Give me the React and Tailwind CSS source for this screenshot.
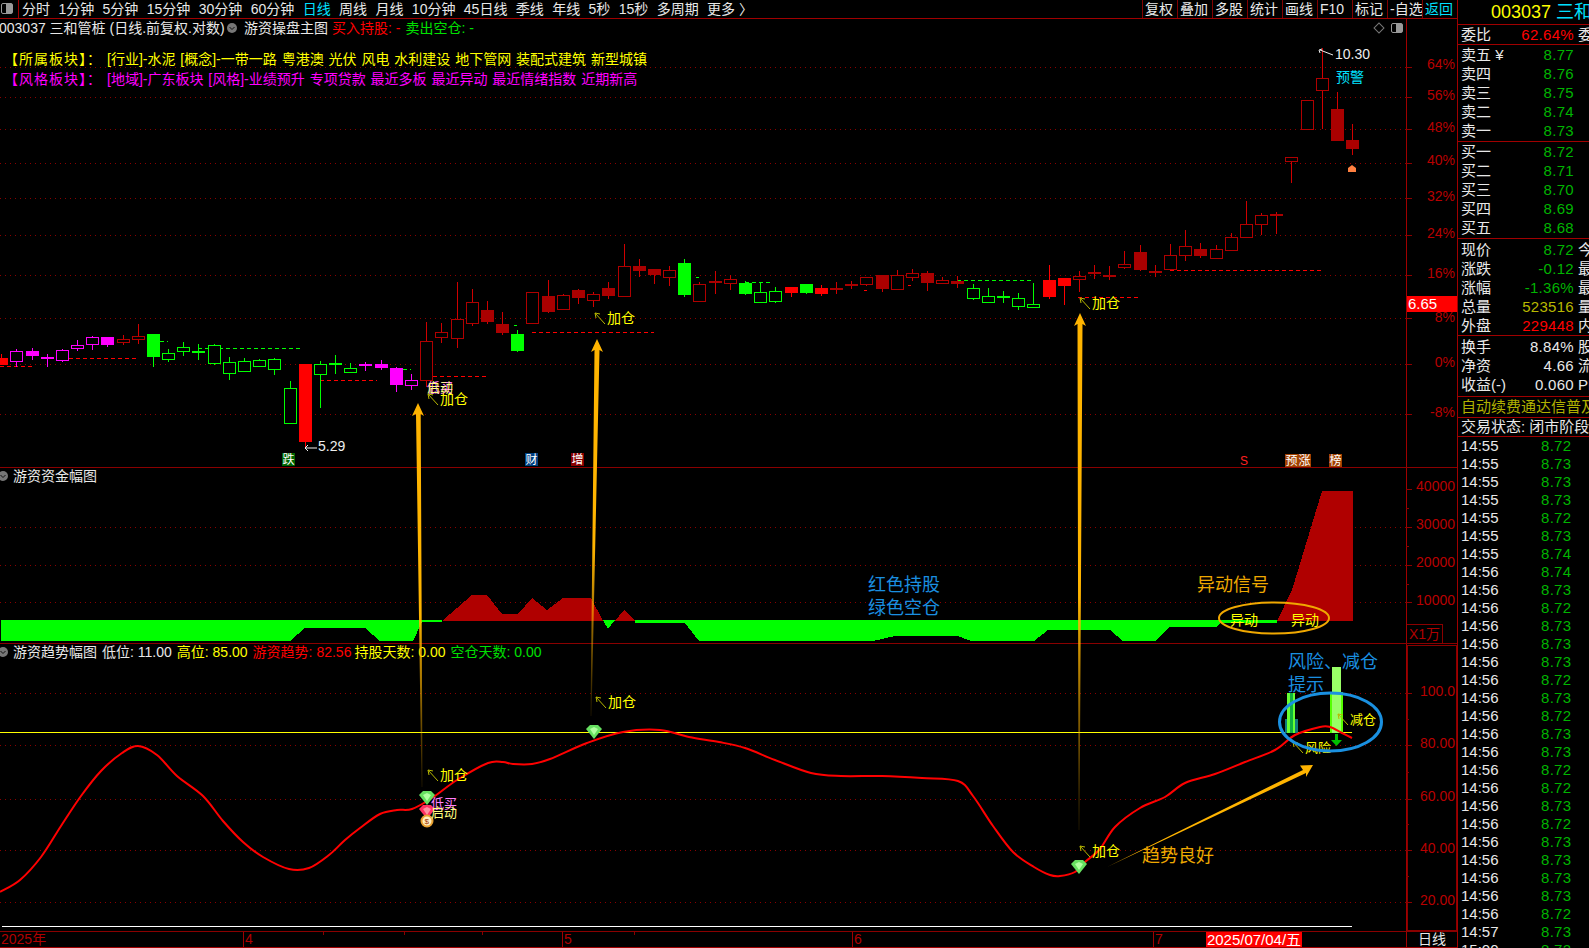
const candles = [
  [358, 365, 354, 365, 'r'], [351, 361, 349, 367, 'M'], [351, 356, 348, 360, 'm'], [357, 359, 354, 367, 'm'],
  [350, 360, 349, 362, 'M'], [345, 348, 340, 351, 'M'], [337, 344, 336, 350, 'M'], [337, 345, 337, 347, 'm'],
  [339, 342, 335, 345, 'h'], [336, 339, 324, 344, 'h'], [334, 357, 334, 367, 'g'], [353, 359, 349, 362, 'G'],
  [347, 351, 342, 356, 'G'], [351, 352, 344, 360, 'g'], [345, 363, 344, 365, 'G'], [362, 373, 357, 380, 'G'],
  [361, 371, 358, 372, 'G'], [360, 366, 359, 367, 'G'], [359, 369, 358, 375, 'G'], [388, 423, 381, 423, 'G'],
  [364, 442, 364, 448, 'r'], [364, 374, 361, 408, 'G'], [363, 365, 355, 374, 'g'], [368, 372, 363, 372, 'G'],
  [364, 366, 362, 371, 'm'], [364, 368, 360, 370, 'm'], [368, 385, 367, 392, 'm'], [380, 385, 374, 390, 'M'],
  [341, 380, 322, 387, 'h'], [332, 337, 323, 343, 'h'], [319, 338, 282, 348, 'h'], [302, 323, 289, 326, 'h'],
  [310, 322, 301, 324, 'd'], [324, 333, 312, 335, 'd'], [334, 351, 330, 352, 'g'], [292, 323, 292, 324, 'h'],
  [296, 312, 280, 313, 'd'], [295, 309, 294, 310, 'h'], [290, 298, 289, 304, 'd'], [294, 300, 292, 307, 'h'],
  [288, 296, 282, 299, 'd'], [266, 296, 244, 296, 'h'], [266, 271, 259, 277, 'd'], [269, 275, 269, 284, 'd'],
  [270, 277, 266, 286, 'h'], [263, 295, 259, 297, 'g'], [284, 301, 282, 301, 'h'], [281, 283, 271, 294, 'd'],
  [279, 283, 275, 290, 'h'], [283, 294, 281, 295, 'g'], [292, 302, 282, 302, 'G'], [291, 301, 287, 303, 'G'],
  [287, 293, 287, 297, 'r'], [284, 293, 284, 294, 'g'], [288, 294, 285, 296, 'r'], [288, 289, 282, 294, 'd'],
  [284, 285, 281, 289, 'd'], [277, 284, 277, 286, 'h'], [275, 289, 275, 292, 'd'], [275, 289, 270, 289, 'h'],
  [273, 277, 269, 281, 'h'], [273, 283, 271, 291, 'd'], [280, 283, 277, 283, 'h'], [281, 284, 276, 288, 'd'],
  [288, 298, 284, 300, 'G'], [296, 302, 288, 302, 'G'], [296, 298, 291, 303, 'g'], [298, 306, 293, 310, 'G'],
  [304, 307, 283, 308, 'G'], [280, 297, 265, 299, 'r'], [278, 286, 278, 305, 'r'], [276, 279, 271, 292, 'h'],
  [272, 274, 265, 279, 'd'], [275, 277, 266, 280, 'd'], [264, 267, 251, 269, 'h'], [252, 270, 245, 271, 'd'],
  [271, 272, 265, 277, 'd'], [255, 269, 244, 270, 'h'], [246, 255, 230, 261, 'h'], [249, 256, 243, 258, 'd'],
  [249, 258, 245, 259, 'h'], [237, 250, 233, 251, 'h'], [224, 237, 201, 237, 'h'], [215, 224, 213, 235, 'h'],
  [214, 215, 212, 234, 'd'], [157, 161, 157, 183, 'h'], [100, 129, 100, 129, 'h'], [78, 90, 48, 129, 'h'],
  [109, 141, 92, 141, 'd'], [140, 149, 124, 155, 'd'],
];

const candleColors = {
  r: { wick: '#ff0000', fill: '#ff0000' },
  d: { wick: '#d00000', fill: '#aa0000' },
  h: { wick: '#d00000', stroke: '#b00000' },
  g: { wick: '#00ff00', fill: '#00ff00' },
  G: { wick: '#00ff00', stroke: '#00ff00' },
  m: { wick: '#ff00ff', fill: '#ff00ff' },
  M: { wick: '#ff00ff', stroke: '#ff00ff' },
};

const dashes = [
  [0, 32, 366, '#ff0000'], [62, 137, 358, '#ff0000'], [160, 168, 341, '#00ff00'], [198, 303, 348, '#00ff00'],
  [320, 377, 380, '#ff0000'], [396, 411, 369, '#00ff00'], [426, 487, 376, '#ff0000'], [514, 517, 325, '#00ff00'],
  [532, 654, 332, '#ff0000'], [696, 699, 277, '#00ff00'], [745, 772, 282, '#00ff00'], [864, 867, 290, '#ff0000'],
  [908, 911, 285, '#ff0000'], [957, 1031, 280, '#00ff00'], [1078, 1140, 297, '#ff0000'], [1170, 1321, 270, '#ff0000'],
];

const gridLines = [67, 97, 129, 163, 198, 235, 275, 318, 364, 414, 527, 565, 602, 693, 745, 799, 850, 902];
const minorTicks = [489, 508, 546, 584, 719, 772, 824, 876];
const axisLabels = [
  ['64%', 64], ['56%', 95], ['48%', 127], ['40%', 160], ['32%', 196], ['24%', 233], ['16%', 273], ['8%', 317],
  ['0%', 362], ['-8%', 412], ['40000', 486], ['30000', 524], ['20000', 562], ['10000', 600],
  ['100.0', 691], ['80.00', 743], ['60.00', 796], ['40.00', 848], ['20.00', 900],
];

const trend = [
  [0, 892], [20, 880], [41, 857], [61, 826], [81, 796], [101, 771], [122, 753], [138, 746], [157, 755], [177, 776],
  [203, 796], [223, 821], [243, 842], [263, 857], [289, 869], [309, 868], [329, 855], [345, 840], [360, 828], [380, 814],
  [397, 810], [412, 809], [432, 798], [457, 780], [488, 763], [503, 762], [513, 764], [532, 764], [550, 759], [587, 743],
  [623, 732], [660, 730], [689, 737], [719, 742], [745, 748], [775, 760], [811, 773], [841, 776], [882, 776], [922, 778],
  [958, 781], [973, 796], [993, 826], [1013, 852], [1034, 867], [1050, 875], [1060, 876], [1075, 872], [1085, 862],
  [1100, 849], [1115, 827], [1140, 808], [1165, 797], [1185, 783], [1215, 774], [1245, 762], [1275, 750], [1295, 735],
  [1320, 727], [1330, 727], [1342, 733], [1352, 738],
];

const redArea = [
  [442, 621], [472, 595], [487, 595], [502, 614], [518, 614], [532, 598], [547, 610], [563, 598], [591, 598], [603, 621],
];

// catmull-rom through the sampled points
function smoothPath(pts) {
  let d = `M${pts[0][0]} ${pts[0][1]}`;
  for (let i = 0; i < pts.length - 1; i++) {
    const p0 = pts[i - 1] || pts[i];
    const p1 = pts[i];
    const p2 = pts[i + 1];
    const p3 = pts[i + 2] || p2;
    d += `C${p1[0] + (p2[0] - p0[0]) / 6} ${p1[1] + (p2[1] - p0[1]) / 6} ${p2[0] - (p3[0] - p1[0]) / 6} ${p2[1] - (p3[1] - p1[1]) / 6} ${p2[0]} ${p2[1]}`;
  }
  return d;
}

function Candle({ i, d }) {
  const x = Math.round(1.15 + 15.18 * i);
  const [top, bottom, high, low, kind] = d;
  const c = candleColors[kind];
  return (
    <g>
      <line x1={x + 0.5} x2={x + 0.5} y1={high} y2={low} stroke={c.wick} />
      {c.fill ? (
        <rect x={x - 6} y={top} width={13} height={Math.max(bottom - top, 2)} fill={c.fill} />
      ) : (
        <rect x={x - 5.5} y={top + 0.5} width={12} height={bottom - top} fill="#000" stroke={c.stroke} />
      )}
    </g>
  );
}

function T({ x, y, size = 14, fill = '#ffff00', anchor, children }) {
  return (
    <text x={x} y={y} fontSize={size} fill={fill} textAnchor={anchor} dominantBaseline="central">
      {children}
    </text>
  );
}

// 加仓/减仓 marker with the little ↖ pointer
function Pointer({ x, y, label, size = 14 }) {
  return (
    <g>
      <path d={`M${x + 10} ${y + 6}L${x} ${y - 5}M${x} ${y - 5}l5 1M${x} ${y - 5}l1 5`} stroke="#b8b800" fill="none" />
      <T x={x + 12} y={y} size={size}>{label}</T>
    </g>
  );
}

function Tag({ x, y, bg, children }) {
  return (
    <g>
      <rect x={x} y={y} width={13} height={13} fill={bg} />
      <T x={x + 0.5} y={y + 6.5} size={12} fill="#fff">{children}</T>
    </g>
  );
}

function Gem({ x, y, color = '#66e060', light = '#b0ffa0' }) {
  return (
    <g>
      <polygon points={`${x - 8},${y - 3} ${x - 4},${y - 7} ${x + 4},${y - 7} ${x + 8},${y - 3} ${x},${y + 7}`} fill={color} />
      <polygon points={`${x - 4},${y - 3} ${x},${y - 5} ${x + 4},${y - 3} ${x},${y + 3}`} fill={light} />
    </g>
  );
}

function BigArrow({ id, points, y1, y2 }) {
  return (
    <g>
      <defs>
        <linearGradient id={id} gradientUnits="userSpaceOnUse" x1="0" x2="0" y1={y1} y2={y2}>
          <stop offset="0.55" stopColor="#ffb400" />
          <stop offset="1" stopColor="#ffb400" stopOpacity="0.1" />
        </linearGradient>
      </defs>
      <polygon points={points} fill={`url(#${id})`} />
    </g>
  );
}

function ChartCanvas() {
  return (
    <svg
      className="absolute left-0 top-0 w-[1457px] h-[948px] pointer-events-none"
      viewBox="0 0 1457 948"
    >
      {/* 网格 */}
      <g shapeRendering="crispEdges">
        {gridLines.map((y) => (
          <g key={y}>
            <line x1="0" x2="1406" y1={y} y2={y} stroke="#8a0000" strokeDasharray="1 4" />
            <line x1="1406" x2="1412" y1={y} y2={y} stroke="#8a0000" />
          </g>
        ))}
        {minorTicks.map((y) => (
          <line key={y} x1="1406" x2={y === 489 ? 1412 : 1409} y1={y} y2={y} stroke="#8a0000" />
        ))}
        {[323, 404, 482, 634].map((x) => (
          <line key={x} x1={x} x2={x} y1="932" y2="935" stroke="#8a0000" />
        ))}
      </g>

      {/* 主图 K线 */}
      <g shapeRendering="crispEdges">
        {dashes.map(([x1, x2, y, color]) => (
          <line key={x1} x1={x1} x2={x2} y1={y} y2={y} stroke={color} strokeDasharray="4 3" />
        ))}
        {candles.map((d, i) => <Candle key={i} i={i} d={d} />)}
      </g>

      <path d="M1322 49l-3 1 1 3M1320 50l13 5" stroke="#eee" fill="none" />
      <T x={1335} y={54} fill="#eee">10.30</T>
      <T x={1336} y={77} fill="#00e0ff">预警</T>
      <path d="M1348 172v-4l4-3 4 3v4z" fill="#ff8040" />
      <path d="M305 448h12M305 448l3-3M305 448l3 3" stroke="#eee" fill="none" />
      <T x={318} y={446} fill="#eee">5.29</T>
      <Tag x={282} y={453} bg="#006400">跌</Tag>
      <Tag x={525} y={453} bg="#003f7f">财</Tag>
      <Tag x={571} y={453} bg="#8a0000">增</Tag>
      <T x={1240} y={461} size={12} fill="#ff2020">S</T>
      <Tag x={1285} y={454} bg="#a04000">预</Tag>
      <Tag x={1298} y={454} bg="#a04000">涨</Tag>
      <Tag x={1329} y={454} bg="#a04000">榜</Tag>

      <T x={427} y={387} size={13} fill="#ff80ff">低买</T>
      <T x={427} y={387} size={13} fill="#ffff80">启动</T>
      <Pointer x={428} y={399} label="加仓" />
      <Pointer x={595} y={318} label="加仓" />
      <Pointer x={1080} y={303} label="加仓" />

      {/* 资金幅图 */}
      <g shapeRendering="crispEdges">
        <polygon
          points="1,620 442,620 442,622 422,622 413,641 380,641 365,628 305,628 290,641 1,641"
          fill="#00ff00"
        />
        <polygon points={redArea.map((p) => p.join(',')).join(' ')} fill="#b00000" />
        <polygon points="603,620 615,620 608,629" fill="#00ff00" />
        <polygon points="615,621 624,610 635,621" fill="#b00000" />
        <polygon
          points="635,620 1277,620 1277,623 1220,623 1217,627 1169,627 1155,641 1123,641 1110,630 1048,630 1034,641 971,641 958,636 895,636 873,641 699,641 685,623 635,623"
          fill="#00ff00"
        />
        <polygon points="1277,621 1292,590 1322,491 1353,491 1353,621" fill="#b00000" />
      </g>
      <T x={868} y={585} size={18} fill="#1a8fe0">红色持股</T>
      <T x={868} y={608} size={18} fill="#1a8fe0">绿色空仓</T>
      <T x={1197} y={585} size={18} fill="#eea800">异动信号</T>
      <T x={1230} y={620}>异动</T>
      <T x={1291} y={620}>异动</T>
      <ellipse cx={1274} cy={618} rx={55} ry={15.5} fill="none" stroke="#f0a800" strokeWidth="2" />

      {/* 趋势幅图 */}
      <g shapeRendering="crispEdges">
        <line x1="0" x2="1352" y1="732.5" y2="732.5" stroke="#ffff00" />
        <line x1="2" x2="1352" y1="926.5" y2="926.5" stroke="#fff" />
        <rect x={1285} y={719} width={13} height={14} fill="#0f7a7a" />
        <rect x={1287} y={693} width={8} height={40} fill="#66ff33" />
        <rect x={1290} y={693} width={3} height={40} fill="#10b040" />
        <rect x={1330} y={692} width={13} height={41} fill="#55ff00" />
        <rect x={1332} y={667} width={9} height={66} fill="#99ff66" />
      </g>
      <path d={smoothPath(trend)} fill="none" stroke="#ff0000" strokeWidth="2" />
      <path d="M1335 734h3v6h4l-5.5 6-5.5-6h4z" fill="#00c000" />
      <Gem x={427} y={798} />
      <Gem x={594} y={732} />
      <Gem x={1079} y={867} />
      <Gem x={427} y={812} color="#ff3060" light="#ff90a0" />
      <circle cx={427} cy={821} r={5.5} fill="#fff0c0" stroke="#e8a030" strokeWidth="2" />
      <T x={424.5} y={821} size={8} fill="#a03000">$</T>
      <T x={431} y={803} size={13} fill="#ff80ff">低买</T>
      <T x={431} y={812} size={13} fill="#ffff80">启动</T>
      <Pointer x={428} y={775} label="加仓" />
      <Pointer x={596} y={702} label="加仓" />
      <Pointer x={1080} y={851} label="加仓" />
      <Pointer x={1338} y={719} label="减仓" size={13} />
      <Pointer x={1293} y={747} label="风险" size={13} />
      <T x={1288} y={662} size={18} fill="#1a8fe0">风险、减仓</T>
      <T x={1288} y={685} size={18} fill="#1a8fe0">提示</T>
      <ellipse cx={1330.5} cy={722} rx={51} ry={29} fill="none" stroke="#1a90e0" strokeWidth="3" />
      <T x={1142} y={856} size={18} fill="#eea800">趋势良好</T>

      {/* 箭头 */}
      <BigArrow id="a1" y1={403} y2={787} points="418,403 424,416 420.7,414 422.5,787 421.5,787 416,414 412,416" />
      <BigArrow id="a2" y1={339} y2={716} points="597,339 603,352 599.5,350 591.5,716 590.5,716 594.5,350 591,352" />
      <BigArrow id="a3" y1={313} y2={830} points="1080,313 1086,326 1082.5,324 1079.5,830 1078.5,830 1077.5,324 1074,326" />
      <polygon points="1313,765 1300,765.5 1303,770 1107,867 1306,773 1306,777" fill="#ffb400" />

      {/* 坐标轴 */}
      {axisLabels.map(([label, y]) => (
        <T key={label} x={1455} y={y} fill="#b80000" anchor="end">{label}</T>
      ))}
    </svg>
  );
}

function Chevron() {
  return (
    <svg viewBox="0 0 10 10" className="w-[10px] h-[10px] shrink-0">
      <circle cx="5" cy="5" r="5" fill="#777" />
      <path d="M2.5 4l2.5 2.5L7.5 4" stroke="#111" fill="none" />
    </svg>
  );
}

const periods = ['分时', '1分钟', '5分钟', '15分钟', '30分钟', '60分钟', '日线', '周线', '月线', '10分钟', '45日线', '季线', '年线', '5秒', '15秒', '多周期', '更多 〉'];
const tools = ['复权', '叠加', '多股', '统计', '画线', 'F10', '标记', '-自选', '返回'];

function Toolbar() {
  return (
    <div className="h-[19px] flex border-b border-[#a00000] text-[14px] leading-[18px] text-[#e8e8e8]">
      <div className="w-[19px] shrink-0 border-r border-[#a00000] pl-[1px] pt-[3px]">
        <div className="w-[12px] h-[11px] border border-[#999] rounded-[2px] flex justify-end">
          <div className="w-[6px] bg-[#999]" />
        </div>
      </div>
      <div className="flex gap-[8.4px] pl-[3px] whitespace-nowrap">
        {periods.map((p) => (
          <span key={p} className={p === '日线' ? 'text-[#00e0ff]' : ''}>{p}</span>
        ))}
      </div>
      <div className="ml-auto flex">
        {tools.map((t) => (
          <span
            key={t}
            className={`w-[35px] border-l border-[#800000] pl-[2px] whitespace-nowrap ${t === '返回' ? 'text-[#00e0ff]' : ''}`}
          >
            {t}
          </span>
        ))}
      </div>
    </div>
  );
}

function Pane({ height, axis, children }) {
  return (
    <section className={`flex border-b border-[#8a0000] ${height}`}>
      <div className="flex-1 min-w-0 text-[14px]">{children}</div>
      <div className="w-[51px] shrink-0 border-l border-[#a00000] flex flex-col justify-end">{axis}</div>
    </section>
  );
}

function MainHeader() {
  return (
    <>
      <div className="h-[18px] leading-[18px] flex items-center whitespace-nowrap text-[#e8e8e8]">
        <span className="w-[228px] shrink-0 -ml-[1px]">003037 三和管桩 (日线.前复权.对数)</span>
        <Chevron />
        <span className="ml-[7px]">游资操盘主图</span>
        <span className="ml-[4px] text-[#ff0000]">买入持股: -</span>
        <span className="ml-[5px] text-[#00e000]">卖出空仓: -</span>
        <div className="ml-auto mr-[3px] flex items-center gap-[8px]">
          <div className="w-[8px] h-[8px] rotate-45 border border-[#777]" />
          <div className="w-[12px] h-[10px] border border-[#999] rounded-[2px] flex justify-end">
            <div className="w-[6px] bg-[#999]" />
          </div>
        </div>
      </div>
      <div className="mt-[12px] h-[20px] leading-[20px] pl-[4px] flex text-[#ffff00] whitespace-nowrap">
        <span className="w-[103px] tracking-[1px]">【所属板块】：</span>
        <span className="[word-spacing:1px]">[行业]-水泥 [概念]-一带一路 粤港澳 光伏 风电 水利建设 地下管网 装配式建筑 新型城镇</span>
      </div>
      <div className="h-[20px] leading-[20px] pl-[4px] flex text-[#ff00ff] whitespace-nowrap">
        <span className="w-[103px] tracking-[1px]">【风格板块】：</span>
        <span className="[word-spacing:1px]">[地域]-广东板块 [风格]-业绩预升 专项贷款 最近多板 最近异动 最近情绪指数 近期新高</span>
      </div>
    </>
  );
}

function ChartHeader({ children }) {
  return (
    <div className="h-[16px] leading-[16px] flex items-center whitespace-nowrap text-[#e8e8e8]">
      <span className="-ml-[2px]"><Chevron /></span>
      {children}
    </div>
  );
}

function DateBar() {
  return (
    <div className="relative h-[16px] flex border-b border-[#a00000] text-[14px] leading-[15px] text-[#b00000]">
      <span className="w-[243px] pl-[1px]">2025年</span>
      <span className="w-[319px] border-l border-[#a00000] pl-[1px]">4</span>
      <span className="w-[290px] border-l border-[#a00000] pl-[1px]">5</span>
      <span className="w-[301px] border-l border-[#a00000] pl-[1px]">6</span>
      <span className="w-[253px] border-l border-[#a00000] pl-[1px]">7</span>
      <span className="flex-1 border-l border-[#a00000] text-[#e8e8e8] text-center">日线</span>
      <span className="absolute left-[1206px] top-0 w-[96px] h-[15px] bg-[#ff0000] text-white text-[15px] text-center whitespace-nowrap">
        2025/07/04/五
      </span>
    </div>
  );
}

const sells = [['卖五 ¥', '8.77'], ['卖四', '8.76'], ['卖三', '8.75'], ['卖二', '8.74'], ['卖一', '8.73']];
const buys = [['买一', '8.72'], ['买二', '8.71'], ['买三', '8.70'], ['买四', '8.69'], ['买五', '8.68']];
const quotes = [
  ['现价', '8.72', '今', 'text-[#00b400]'],
  ['涨跌', '-0.12', '最', 'text-[#00b400]'],
  ['涨幅', '-1.36%', '最', 'text-[#00b400]'],
  ['总量', '523516', '量', 'text-[#b8b800]'],
  ['外盘', '229448', '内', 'text-[#ff0000]'],
];
const funds = [['换手', '8.84%', '股'], ['净资', '4.66', '流'], ['收益(-)', '0.060', 'PE']];
const ticks = [
  '8.72', '8.73', '8.73', '8.73', '8.72', '8.73', '8.74', '8.74', '8.73', '8.72', '8.73', '8.73', '8.73', '8.72', '8.73',
  '8.72', '8.73', '8.73', '8.72', '8.72', '8.73', '8.72', '8.73', '8.73', '8.73', '8.73', '8.72', '8.73', '8.72',
];

function Row({ label, value, extra, color = 'text-[#00b400]' }) {
  return (
    <div className="h-[19px] leading-[19px] flex pl-[3px] whitespace-nowrap">
      <span className="w-[42px] shrink-0">{label}</span>
      <span className={`w-[71px] shrink-0 text-right tracking-[0.3px] ${color}`}>{value}</span>
      {extra && <span className="ml-[4px] shrink-0">{extra}</span>}
    </div>
  );
}

function QuotePanel() {
  return (
    <aside className="w-[132px] h-[948px] shrink-0 overflow-hidden border-l border-[#a00000] text-[15px] text-[#e8e8e8]">
      <div className="h-[25px] flex items-center gap-[5px] pl-[33px] border-b border-[#a00000] text-[18px] whitespace-nowrap">
        <span className="text-[#ffff00]">003037</span>
        <span className="text-[#00e0ff]">三和管桩</span>
      </div>
      <div className="h-[20px] border-b border-[#a00000]">
        <Row label="委比" value="62.64%" extra="委" color="text-[#ff0000]" />
      </div>
      <div className="h-[97px] border-b border-[#a00000]">
        {sells.map(([l, v]) => <Row key={l} label={l} value={v} />)}
      </div>
      <div className="h-[97px] border-b border-[#a00000]">
        {buys.map(([l, v]) => <Row key={l} label={l} value={v} />)}
      </div>
      <div className="h-[97px] pt-[1px] border-b border-[#a00000]">
        {quotes.map(([l, v, e, c]) => <Row key={l} label={l} value={v} extra={e} color={c} />)}
      </div>
      <div className="h-[61px] pt-[1px] border-b border-[#a00000]">
        {funds.map(([l, v, e]) => <Row key={l} label={l} value={v} extra={e} color="text-[#e8e8e8]" />)}
      </div>
      <div className="h-[21px] leading-[20px] pl-[3px] border-b border-[#a00000] text-[#b0b000] whitespace-nowrap">
        自动续费通达信普及版
      </div>
      <div className="h-[19px] leading-[18px] pl-[3px] border-b border-[#a00000] whitespace-nowrap">
        交易状态: 闭市阶段
      </div>
      {ticks.map((price, i) => (
        <div key={i} className="h-[18px] leading-[18px] flex pl-[3px]">
          <span className="w-[80px]">{i < 7 ? '14:55' : i < 27 ? '14:56' : i === 27 ? '14:57' : '15:00'}</span>
          <span className="w-[30px] text-right tracking-[0.3px] text-[#00b400]">{price}</span>
        </div>
      ))}
    </aside>
  );
}

export default function App() {
  return (
    <div className="w-[1589px] h-[948px] flex bg-black overflow-hidden font-['Liberation_Sans','Noto_Sans_CJK_SC',sans-serif]">
      <div className="relative w-[1457px] h-[948px] shrink-0 flex flex-col">
        <Toolbar />
        <Pane height="h-[449px]">
          <MainHeader />
        </Pane>
        <Pane
          height="h-[176px]"
          axis={
            <div className="w-[36px] h-[19px] border-t border-r border-[#8a0000] text-[#b00000] text-[14px] leading-[18px] text-center">
              X1万
            </div>
          }
        >
          <ChartHeader>
            <span className="ml-[5px]">游资资金幅图</span>
          </ChartHeader>
        </Pane>
        <Pane
          height="h-[288px]"
          axis={<div className="h-full mt-[1px] border border-[#8a0000]" />}
        >
          <ChartHeader>
            <span className="ml-[5px]">游资趋势幅图</span>
            <span className="ml-[5px]">低位: 11.00</span>
            <span className="ml-[5px] text-[#ffff00]">高位: 85.00</span>
            <span className="ml-[5px] text-[#ff0000]">游资趋势: 82.56</span>
            <span className="ml-[3px] text-[#ffff00]">持股天数: 0.00</span>
            <span className="ml-[5px] text-[#00e000]">空仓天数: 0.00</span>
          </ChartHeader>
        </Pane>
        <DateBar />
        <ChartCanvas />
        <span className="absolute left-[1407px] top-[296px] w-[50px] h-[16px] bg-[#ff0000] text-white text-[15px] leading-[16px] pl-[1px]">
          6.65
        </span>
      </div>
      <QuotePanel />
    </div>
  );
}
